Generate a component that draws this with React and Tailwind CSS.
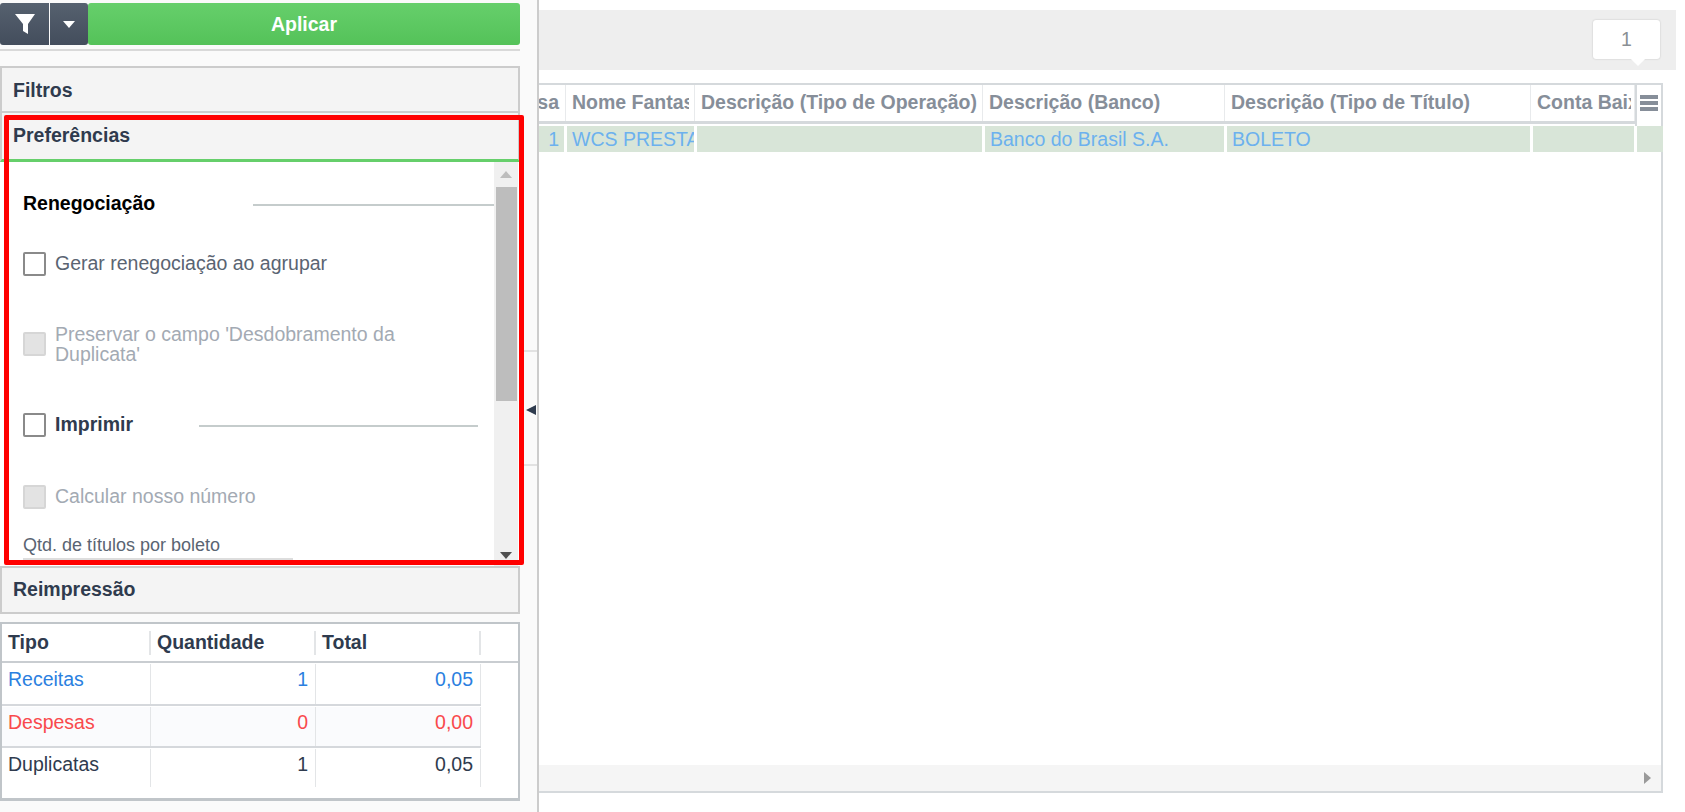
const font = { fontFamily: "'Liberation Sans', Arial, sans-serif" };

function Check({ disabled }) {
  return (
    <span className={`w-[23px] h-[24px] shrink-0 rounded-[2px] border-2 ${disabled ? "bg-[#e3e3e3] border-[#d6d6d6]" : "bg-white border-[#8a8a8a]"}`} />
  );
}

function ColHead({ w, children, tight }) {
  return (
    <div className={`shrink-0 h-full flex items-center pl-[6px] whitespace-nowrap text-[19.5px] font-bold text-[#868e99] border-r border-[#e8eaec] ${tight ? "pr-[3px]" : "pr-[5px]"}`} style={{ width: w }}>
      <span className="block overflow-hidden">{children}</span>
    </div>
  );
}

function Cell({ w, children, right }) {
  return (
    <div className={`shrink-0 h-full bg-[#d8e5d8] overflow-hidden whitespace-nowrap flex items-center pt-[1px] text-[19.5px] text-[#6cb1ee] ${right ? "justify-end pr-[5px]" : "pl-[5px]"}`} style={{ width: w }}>
      {children}
    </div>
  );
}

function SumRow({ label, qty, total, color, bg, h }) {
  return (
    <div className={`flex ${bg} ${color}`} style={{ height: h }}>
      <div className="w-[149px] shrink-0 pl-[6px] pt-[1px] border-r border-[#e3e5e7]">{label}</div>
      <div className="w-[165px] shrink-0 pr-[7px] pt-[1px] text-right border-r border-[#e3e5e7]">{qty}</div>
      <div className="w-[165px] shrink-0 pr-[7px] pt-[1px] text-right border-r border-[#e3e5e7]">{total}</div>
    </div>
  );
}

export default function App() {
  return (
    <div className="flex h-[812px] w-[1685px] overflow-hidden bg-white" style={font}>
      <aside className="relative w-[539px] shrink-0 flex bg-[#fafafa] border-r-2 border-[#cccccc]">
        <div className="w-[520px] shrink-0 flex flex-col">
          <div className="flex h-[42px] mt-[3px] shrink-0">
            <button className="w-[49px] rounded-l-[3px] bg-gradient-to-b from-[#56616f] to-[#434d5c] flex items-center justify-center">
              <svg width="20" height="22" viewBox="0 0 20 22"><path d="M0 1h20l-7 10v10l-5-3v-7z" fill="#fff" /></svg>
            </button>
            <button className="w-[38px] ml-[1px] rounded-r-[3px] bg-gradient-to-b from-[#56616f] to-[#434d5c] flex items-center justify-center">
              <svg width="12" height="7" viewBox="0 0 12 7"><path d="M0 0h12L6 7z" fill="#fff" /></svg>
            </button>
            <button className="flex-1 rounded-[3px] pt-[1px] bg-gradient-to-b from-[#66cf6b] to-[#54c259] text-white font-bold text-[19.5px]">Aplicar</button>
          </div>
          <div className="h-[2px] mt-[4px] bg-[#d9d9d9] shrink-0" />
          <div className="mt-[15px] h-[47px] shrink-0 bg-[#f4f4f4] border-2 border-[#cccccc] flex items-center pl-[11px] pt-[2px] text-[19.5px] font-bold text-[#2f3b4e]">Filtros</div>
          <div className="h-[49px] shrink-0 bg-[#f4f4f4] border-x-2 border-[#cccccc] border-b-[3px] border-b-[#66cf6b] flex items-center pl-[11px] text-[19.5px] font-bold text-[#2f3b4e]">Preferências</div>
          <div className="h-[404px] shrink-0 bg-white flex overflow-hidden">
            <div className="flex-1 pl-[23px] flex flex-col overflow-hidden">
              <div className="flex items-center h-[24px] mt-[30px] shrink-0">
                <span className="w-[230px] font-bold text-[19.5px] text-black">Renegociação</span>
                <span className="flex-1 h-[2px] mt-[2px] bg-[#c5cccc]" />
              </div>
              <div className="flex items-center gap-[9px] mt-[36px] shrink-0">
                <Check />
                <span className="text-[19.5px] leading-[20px] text-[#5a6472] -mt-[2px]">Gerar renegociação ao agrupar</span>
              </div>
              <div className="flex items-center gap-[9px] mt-[47px] shrink-0 h-[42px]">
                <Check disabled />
                <span className="text-[19.5px] leading-[20px] text-[#a3aab3] w-[390px] -mt-[1px]">Preservar o campo 'Desdobramento da Duplicata'</span>
              </div>
              <div className="flex items-center gap-[9px] mt-[45px] shrink-0">
                <Check />
                <span className="w-[135px] font-bold text-[19.5px] text-[#2f3b4e]">Imprimir</span>
                <span className="w-[279px] h-[2px] mt-[2px] bg-[#c5cccc]" />
              </div>
              <div className="flex items-center gap-[9px] mt-[43px] shrink-0">
                <Check disabled />
                <span className="text-[19.5px] text-[#a3aab3]">Calcular nosso número</span>
              </div>
              <div className="mt-[23px] text-[18px] leading-[20px] text-[#5a6472] shrink-0">Qtd. de títulos por boleto</div>
              <div className="mt-[3px] w-[270px] h-[2px] bg-[#dddddd] shrink-0" />
            </div>
            <div className="w-[24px] shrink-0 mr-[2px] bg-[#f0f0f0] flex flex-col items-center justify-between pt-[9px] pb-[7px]">
              <div className="flex flex-col items-center w-full">
                <svg width="12" height="7" viewBox="0 0 12 7"><path d="M0 7h12L6 0z" fill="#bdbdbd" /></svg>
                <div className="w-[21px] h-[214px] mt-[9px] bg-[#bdbdbd]" />
              </div>
              <svg width="12" height="7" viewBox="0 0 12 7"><path d="M0 0h12L6 7z" fill="#505050" /></svg>
            </div>
          </div>
          <div className="h-[48px] shrink-0 bg-[#f4f4f4] border-2 border-[#cccccc] flex items-center pl-[11px] text-[19.5px] font-bold text-[#2f3b4e]">Reimpressão</div>
          <div className="mt-[8px] h-[179px] shrink-0 bg-white border-2 border-[#c0c5c9] border-b-[3px] text-[19.5px]">
            <div className="flex h-[39px] border-b-2 border-[#c9cdd1] items-center font-bold text-[#2f3b4e]">
              <div className="w-[149px] shrink-0 pl-[6px] h-[24px] leading-[22px] border-r-2 border-[#e3e5e7]">Tipo</div>
              <div className="w-[165px] shrink-0 pl-[6px] h-[24px] leading-[22px] border-r-2 border-[#e3e5e7]">Quantidade</div>
              <div className="w-[165px] shrink-0 pl-[6px] h-[24px] leading-[22px] border-r-2 border-[#e3e5e7]">Total</div>
            </div>
            <div className="w-[479px] -mr-[1px]">
              <div className="mt-[1px] border-b-2 border-[#d5d8dc]"><SumRow label="Receitas" qty="1" total="0,05" color="text-[#2b7fe0]" bg="bg-white" h="40px" /></div>
              <div className="mt-[1px] border-b-2 border-[#d5d8dc]"><SumRow label="Despesas" qty="0" total="0,00" color="text-[#f9494c]" bg="bg-[#fafbfd]" h="39px" /></div>
              <div className="mt-[1px]"><SumRow label="Duplicatas" qty="1" total="0,05" color="text-[#2f3b4e]" bg="bg-white" h="38px" /></div>
            </div>
          </div>
        </div>
        <div className="flex-1 flex flex-col justify-center pl-[4px] pt-[3px]">
          <div className="h-[116px] border-y-2 border-[#e2e2e2] flex items-center pt-[4px] pl-[2px]">
            <svg width="10" height="10" viewBox="0 0 10 10"><path d="M0 5l10-5v10z" fill="#2f3b4e" /></svg>
          </div>
        </div>
        <div className="absolute left-[4px] top-[115px] w-[520px] h-[450px] border-[5px] border-[#ff0000] rounded-[2px] pointer-events-none" />
      </aside>

      <main className="flex-1 min-w-0 flex flex-col">
        <div className="relative h-[60px] mt-[10px] w-[1137px] shrink-0 bg-[#eeeeee]">
          <div className="absolute left-[1054px] top-[10px] w-[67px] h-[39px] rounded-[3px] bg-white shadow-[0_0_2px_rgba(0,0,0,0.2)] flex items-center justify-center text-[19.5px] text-[#8a8f94]">
            1
            <span className="absolute -bottom-[5px] left-[40px] w-[10px] h-[10px] rotate-45 bg-white" />
          </div>
        </div>
        <div className="mt-[13px] w-[1124px] h-[710px] shrink-0 flex flex-col border-t-2 border-r-2 border-b-2 border-[#d5d9dc]">
          <div className="flex h-[36px] shrink-0">
            <div className="w-[27px] shrink-0 h-full flex items-center justify-end pr-[6px] overflow-hidden text-[19.5px] font-bold text-[#868e99] border-r border-[#e8eaec]">sa</div>
            <ColHead w="129px">Nome Fantasia</ColHead>
            <ColHead w="288px">Descrição (Tipo de Operação)</ColHead>
            <ColHead w="242px">Descrição (Banco)</ColHead>
            <ColHead w="306px">Descrição (Tipo de Título)</ColHead>
            <ColHead w="104px" tight>Conta Baixa</ColHead>
            <div className="flex-1 h-[41px] border-l-2 border-[#d5d9dc] bg-white flex justify-center pt-[10px] relative z-10">
              <svg width="18" height="16" viewBox="0 0 18 16"><path d="M0 0h18v4H0zM0 6h18v4H0zM0 12h18v4H0z" fill="#868e99" /></svg>
            </div>
          </div>
          <div className="h-[3px] bg-[#d5d9dc] w-[1098px] shrink-0" />
          <div className="flex gap-[3px] h-[26px] mt-[2px] shrink-0">
            <Cell w="25px" right>1</Cell>
            <Cell w="127px">WCS PRESTADORA</Cell>
            <Cell w="285px"></Cell>
            <Cell w="239px">Banco do Brasil S.A.</Cell>
            <Cell w="303px">BOLETO</Cell>
            <Cell w="101px"></Cell>
            <Cell w="26px"></Cell>
          </div>
          <div className="flex-1" />
          <div className="h-[26px] shrink-0 bg-[#f5f5f5] flex items-center justify-end pr-[10px]">
            <svg width="7" height="12" viewBox="0 0 7 12"><path d="M0 0l7 6-7 6z" fill="#9a9a9a" /></svg>
          </div>
        </div>
      </main>
    </div>
  );
}
